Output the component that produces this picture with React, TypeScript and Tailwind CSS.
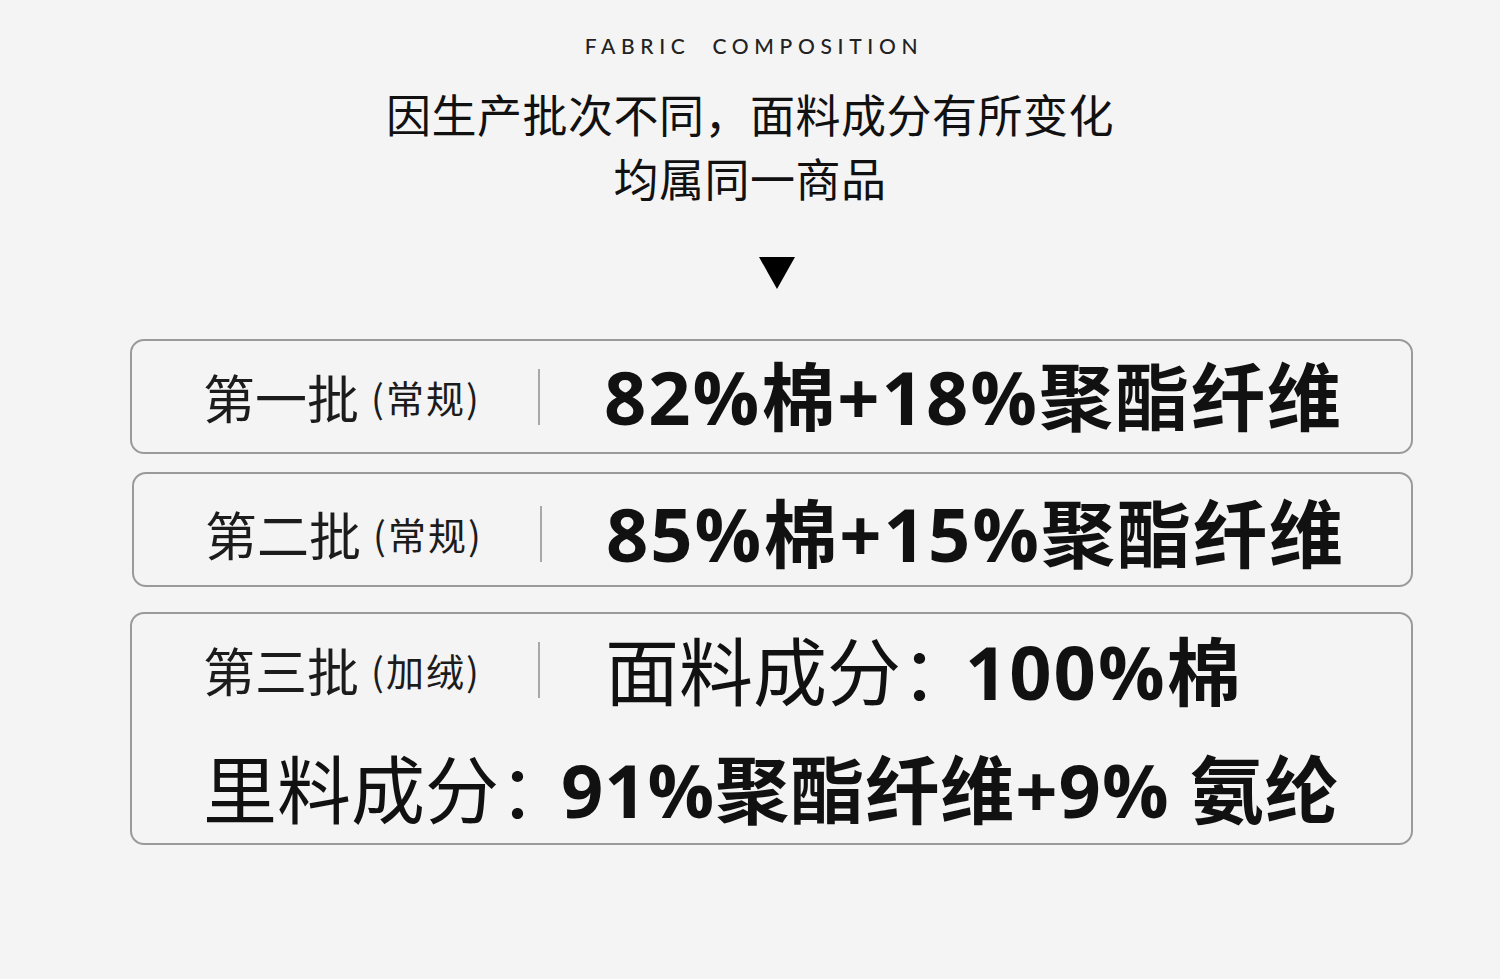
import React from 'react';

const cjk = { fontFamily: '"Noto Sans CJK SC", sans-serif' };

// bold figures: Open Sans digits are wide like the reference, CJK falls through
const bold = { fontFamily: '"Open Sans", "Noto Sans CJK SC", sans-serif' };

function Label({ main, note }: { main: string; note: string }) {
  return (
    <div className="flex items-center w-[337px] flex-shrink-0">
      <span className="text-[52px] leading-none text-[#1c1c1c]">{main}</span>
      <span className="text-[38px] leading-none text-[#1c1c1c] ml-[12px] tracking-[2px]">({note})</span>
      <div className="ml-auto w-[2px] h-[56px] bg-[#a8a8a8]" />
    </div>
  );
}

const batches = [
  { main: '第一批', note: '常规', text: '82%棉+18%聚酯纤维' },
  { main: '第二批', note: '常规', text: '85%棉+15%聚酯纤维' },
];

export default function App() {
  return (
    <div className="min-h-[979px] bg-[#f4f4f4] pt-[34px] text-[#111]" style={cjk}>
      {/* Heading */}
      <div className="text-center">
        <p
          className="text-[21px] leading-[24px] tracking-[0.27em] whitespace-pre text-[#222] font-medium pl-[8px]"
          style={{ fontFamily: '"Lato", sans-serif' }}
        >
          FABRIC  COMPOSITION
        </p>
        <div className="mt-[24px] text-[45px] leading-[64px] tracking-[0.5px]">
          <p>因生产批次不同，面料成分有所变化</p>
          <p>均属同一商品</p>
        </div>
      </div>

      <div className="flex justify-center mt-[47px] pl-[54px]">
        <svg width="36" height="32" viewBox="0 0 36 32">
          <polygon points="0,0 36,0 18,32" fill="#000" />
        </svg>
      </div>

      {/* Batches */}
      <div className="ml-[130px] w-[1283px] mt-[50px] flex flex-col">
        {batches.map((b, i) => (
          <div
            key={b.main}
            className={`h-[115px] border-2 border-[#9a9a9a] rounded-[14px] flex items-center pl-[71px] ${
              i === 1 ? 'mt-[18px] ml-[2px] pt-[8px]' : ''
            }`}
          >
            <Label main={b.main} note={b.note} />
            <span
              className="ml-[64px] text-[74px] leading-none font-bold tracking-[2px] whitespace-nowrap"
              style={bold}
            >
              {b.text}
            </span>
          </div>
        ))}

        <div className="mt-[25px] h-[233px] border-2 border-[#9a9a9a] rounded-[14px] pl-[71px] flex flex-col justify-center gap-[40px]">
          <div className="flex items-center">
            <Label main="第三批" note="加绒" />
            <span className="ml-[65px] text-[74px] leading-none whitespace-nowrap">
              面料成分<span className="tracking-[-10px]">：</span>
              <span className="font-bold tracking-[2px]" style={bold}>
                100%棉
              </span>
            </span>
          </div>
          <div className="text-[74px] leading-none whitespace-nowrap">
            里料成分<span className="tracking-[-12px]">：</span>
            <span className="font-bold tracking-[1px]" style={bold}>
              91%聚酯纤维+9% 氨纶
            </span>
          </div>
        </div>
      </div>
    </div>
  );
}
